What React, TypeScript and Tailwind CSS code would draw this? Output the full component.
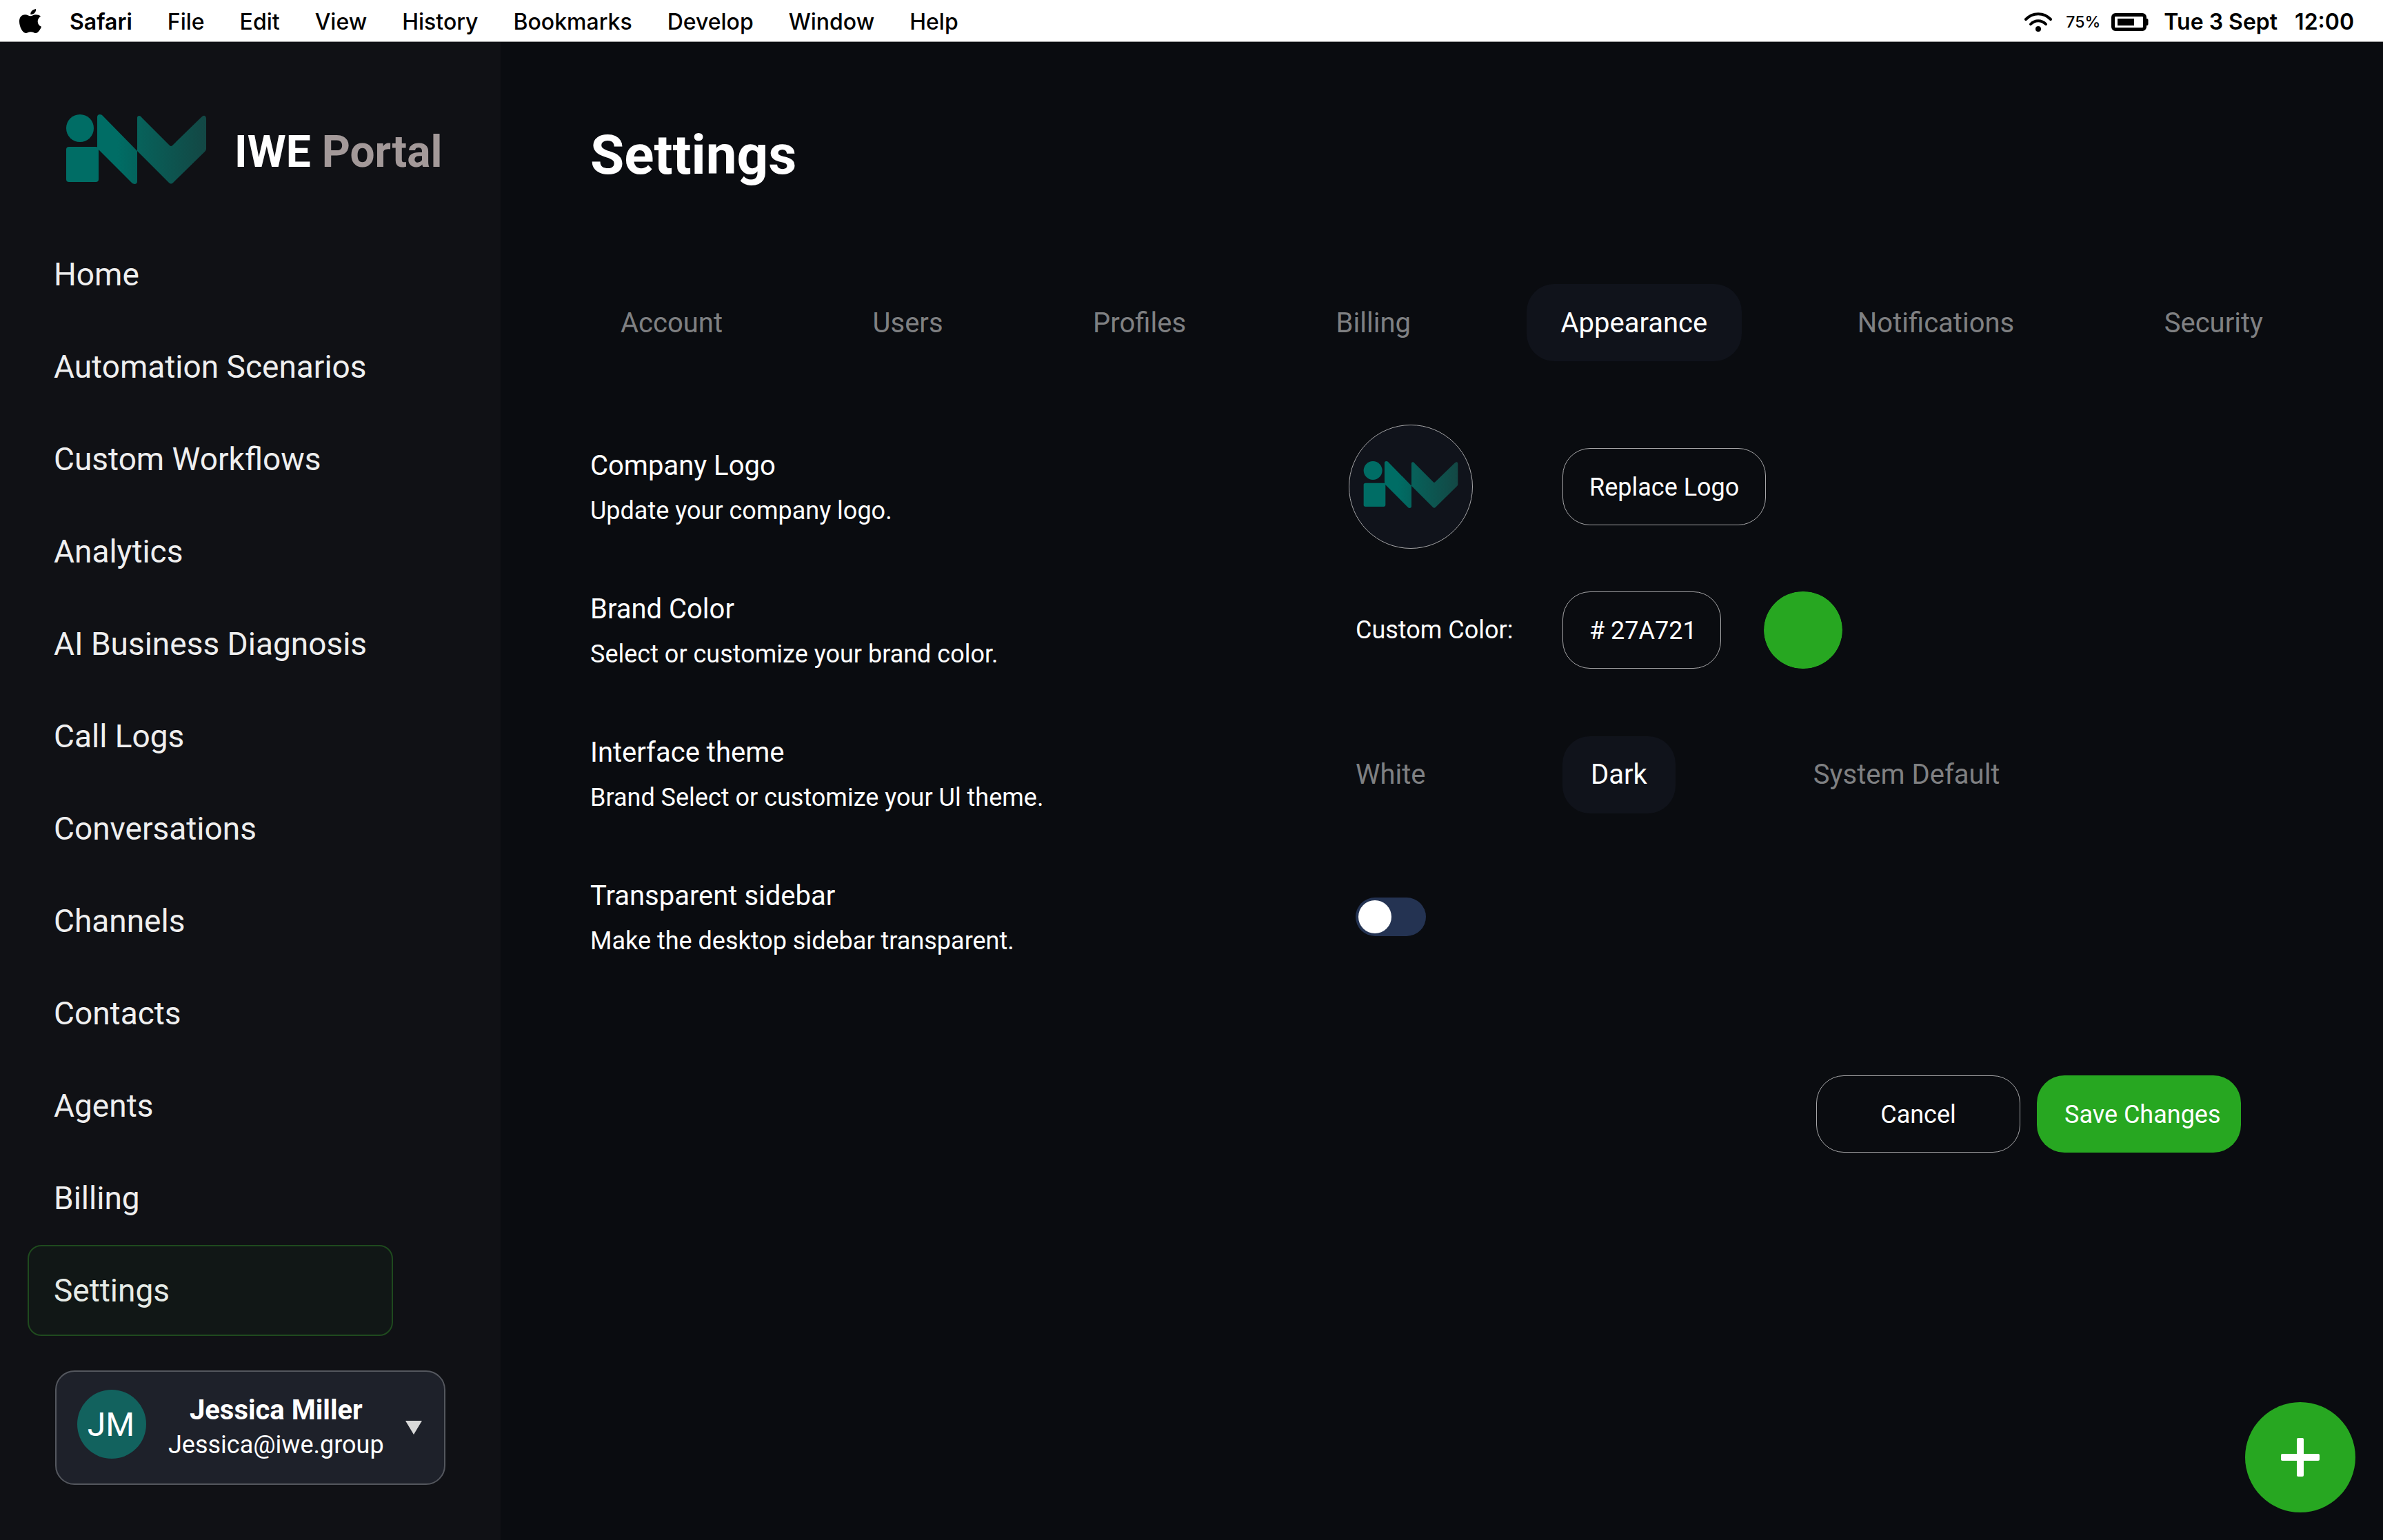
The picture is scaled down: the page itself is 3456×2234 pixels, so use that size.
import { useId, useState } from "react";

const menus = ["File", "Edit", "View", "History", "Bookmarks", "Develop", "Window", "Help"];

const navItems = [
  "Home",
  "Automation Scenarios",
  "Custom Workflows",
  "Analytics",
  "AI Business Diagnosis",
  "Call Logs",
  "Conversations",
  "Channels",
  "Contacts",
  "Agents",
  "Billing",
  "Settings",
];

const tabs = ["Account", "Users", "Profiles", "Billing", "Appearance", "Notifications", "Security"];

function AppleIcon() {
  return (
    <svg viewBox="0 0 96 105" className="h-[35px] w-8" fill="#000" aria-hidden="true">
      <path d="M72 0C74 12 64 25 49 24C47 13 58 2 72 0Z" />
      <path d="M49 31C41 31 35 25 25 25C10 25 0 37 0 54C0 78 15 105 28 105C36 105 40 100 50 100C60 100 63 105 71 105C82 105 92 88 96 77C86 73 80 65 80 54C80 45 85 37 93 32C87 27 80 25 72 25C62 25 56 31 49 31Z" />
    </svg>
  );
}

function WifiIcon() {
  return (
    <svg viewBox="0 0 40 28" className="h-7 w-10" fill="none" aria-hidden="true">
      <path d="M2 10C12 -0.5 28 -0.5 38 10" stroke="#000" strokeWidth="4" strokeLinecap="round" />
      <path d="M9 17C15 10.5 25 10.5 31 17" stroke="#000" strokeWidth="4" strokeLinecap="round" />
      <circle cx="20" cy="24" r="4" fill="#000" />
    </svg>
  );
}

function BatteryIcon() {
  return (
    <svg viewBox="0 0 54 26" className="h-[26px] w-[54px]" aria-hidden="true">
      <rect x="2.5" y="2.5" width="46" height="21" rx="3.5" fill="#fff" stroke="#000" strokeWidth="5" />
      <rect x="9" y="8" width="24" height="10" fill="#000" />
      <path d="M50 8h1.5a2 2 0 0 1 2 2v6a2 2 0 0 1-2 2H50z" fill="#000" />
    </svg>
  );
}

function Logo({ className }: { className: string }) {
  const id = useId();
  return (
    <svg viewBox="0 0 203 101" className={className} role="img" aria-label="IWE logo">
      <defs>
        <linearGradient id={`${id}a`} gradientUnits="userSpaceOnUse" x1="45" y1="0" x2="103" y2="0">
          <stop offset="0.5" stopColor="#006d65" />
          <stop offset="1" stopColor="#04635c" />
        </linearGradient>
        <linearGradient id={`${id}b`} gradientUnits="userSpaceOnUse" x1="103" y1="0" x2="203" y2="0">
          <stop offset="0" stopColor="#07625b" />
          <stop offset="1" stopColor="#134744" />
        </linearGradient>
      </defs>
      <circle cx="20" cy="20" r="20" fill="#006d65" />
      <rect x="0" y="47" width="47" height="51" rx="4" fill="#006d65" />
      <path
        d="M45 4Q45 0 49 0Q52 0 54 3L103 53V97Q103 101 99 101Q96 101 94 98L47 51L45 50Z"
        fill={`url(#${id}a)`}
      />
      <path
        d="M103 5Q103 2 106 2Q108 2 110 5L150 45Q152 47 154 45L196 4Q199 1 201 2Q203 3 203 6V50Q203 52 201 54L155 99Q152 102 149 99L103 53Z"
        fill={`url(#${id}b)`}
      />
    </svg>
  );
}

function MenuBar() {
  return (
    <header className="flex h-[61px] shrink-0 items-center justify-between border-b border-[#8a8a8a] bg-white pt-1 pr-[42px] pl-7 font-[Inter,sans-serif] text-[32px] leading-10 font-medium text-black">
      <div className="flex items-center">
        <button className="mr-[41px] -mt-1" aria-label="Apple menu">
          <AppleIcon />
        </button>
        <div className="flex items-center gap-[51px]">
          <button className="font-semibold">Safari</button>
          {menus.map((m) => (
            <button key={m}>{m}</button>
          ))}
        </div>
      </div>
      <div className="flex items-center">
        <WifiIcon />
        <span className="ml-5 text-[23px]">75%</span>
        <span className="ml-4">
          <BatteryIcon />
        </span>
        <span className="ml-[22px] font-semibold">Tue 3 Sept</span>
        <span className="ml-[25px] font-semibold">12:00</span>
      </div>
    </header>
  );
}

function Sidebar() {
  return (
    <aside className="flex w-[726px] shrink-0 flex-col bg-[#101115] pb-[79px]">
      <div className="flex items-center gap-[41px] pt-[105px] pl-24">
        <Logo className="h-[101px] w-[203px]" />
        <span className="pt-2 text-[64px] leading-[76px] font-bold text-white">
          IWE <span className="text-[#a39999]">Portal</span>
        </span>
      </div>
      <nav className="mt-[65px] flex w-[570px] flex-col gap-0.5 pl-10 text-[46px] leading-[56px]">
        {navItems.map((item) => (
          <a
            key={item}
            href="#"
            className={
              item === "Settings"
                ? "flex h-[132px] items-center rounded-[20px] border-2 border-[#1f4a1e] bg-[#111716] pl-9 text-[#e6ebe6]"
                : "flex h-[132px] items-center pl-[38px] text-[#efefef]"
            }
          >
            {item}
          </a>
        ))}
      </nav>
      <button className="mt-[50px] mr-20 ml-20 flex h-[166px] items-center rounded-[28px] border-2 border-[#54575e] bg-[#1e212a] pr-8 pb-2.5 pl-[30px] text-white">
        <span className="flex size-[100px] items-center justify-center rounded-full bg-[#12625e] pt-0.5 pr-0.5 text-[48px] leading-[56px]">
          JM
        </span>
        <span className="ml-8 flex flex-col pt-2.5 text-center">
          <span className="text-[40px] leading-[50px] font-bold">Jessica Miller</span>
          <span className="text-[36px] leading-[50px]">Jessica@iwe.group</span>
        </span>
        <svg viewBox="0 0 24 20" className="mt-2.5 ml-auto h-5 w-6" fill="#d9d9d9" aria-hidden="true">
          <path d="M0 0H24L12 20Z" />
        </svg>
      </button>
    </aside>
  );
}

const rowClass = "grid h-[208px] grid-cols-[1110fr_300fr_984fr] items-center";
const themeClass =
  "inline-flex h-28 cursor-pointer items-center rounded-[40px] text-[40px] leading-[48px] text-[#7f8082] has-checked:bg-[#10131b] has-checked:px-[41px] has-checked:text-white";
const outlineClass =
  "h-28 rounded-[40px] border border-[#a6a6a8] bg-transparent px-[38px] pt-0.5 text-[36px] leading-[44px] text-white";

function RowLabel({ title, text, htmlFor }: { title: string; text: string; htmlFor?: string }) {
  return (
    <div className="flex flex-col gap-[19px] pt-0.5 text-white">
      <label htmlFor={htmlFor} className="text-[40px] leading-[48px]">
        {title}
      </label>
      <p className="text-[36px] leading-[44px]">{text}</p>
    </div>
  );
}

function ThemeOption({
  name,
  value,
  onPick,
}: {
  name: string;
  value: string;
  onPick: (name: string) => void;
}) {
  return (
    <label className={themeClass}>
      <input
        type="radio"
        name="theme"
        className="sr-only"
        checked={value === name}
        onChange={() => onPick(name)}
      />
      {name}
    </label>
  );
}

export default function App() {
  const [tab, setTab] = useState("Appearance");
  const [theme, setTheme] = useState("Dark");
  const [color, setColor] = useState("27A721");
  const [transparent, setTransparent] = useState(false);

  return (
    <div className="flex min-h-screen flex-col bg-[#0a0c10] font-[Roboto,sans-serif]">
      <MenuBar />
      <div className="flex grow">
        <Sidebar />
        <main className="flex min-w-0 grow flex-col">
          <h1 className="pt-[116px] pl-[130px] text-[80px] leading-[96px] font-bold text-white">Settings</h1>

          <div role="tablist" className="mt-[139px] flex justify-between px-[124px] text-[40px] leading-[48px]">
            {tabs.map((t) => (
              <button
                key={t}
                role="tab"
                aria-selected={t === tab}
                onClick={() => setTab(t)}
                className="h-28 rounded-[40px] px-[50px] pt-0.5 text-[#7f8082] aria-selected:bg-[#10131b] aria-selected:text-white"
              >
                {t}
              </button>
            ))}
          </div>

          <form className="mt-[78px] pr-[206px] pl-[130px]" onSubmit={(e) => e.preventDefault()}>
            <div className={rowClass}>
              <RowLabel title="Company Logo" text="Update your company logo." htmlFor="logo" />
              <div className="-ml-2.5 flex size-[180px] items-center justify-center rounded-full border border-[#a6a6a8] bg-[#10131b] pb-1.5">
                <Logo className="h-[68px] w-[138px]" />
              </div>
              <div>
                <button id="logo" type="button" className={outlineClass}>
                  Replace Logo
                </button>
              </div>
            </div>

            <div className={rowClass}>
              <RowLabel title="Brand Color" text="Select or customize your brand color." htmlFor="swatch" />
              <label htmlFor="hex" className="text-[36px] leading-[44px] text-white">
                Custom Color:
              </label>
              <div className="flex items-center gap-[62px]">
                <input
                  id="hex"
                  type="text"
                  value={`# ${color}`}
                  onChange={(e) => setColor(e.target.value.replace(/[^0-9a-fA-F]/g, "").slice(0, 6))}
                  className={`${outlineClass} w-[230px] pr-0`}
                />
                <input
                  id="swatch"
                  type="color"
                  value={`#${color.padEnd(6, "0").toLowerCase()}`}
                  onChange={(e) => setColor(e.target.value.slice(1).toUpperCase())}
                  className="h-28 w-[114px] cursor-pointer appearance-none rounded-full border-0 bg-transparent p-0 [&::-webkit-color-swatch]:rounded-full [&::-webkit-color-swatch]:border-0 [&::-webkit-color-swatch-wrapper]:p-0"
                />
              </div>
            </div>

            <div className={rowClass} role="radiogroup" aria-label="Interface theme">
              <RowLabel title="Interface theme" text="Brand Select or customize your Ul theme." />
              <div className="flex pt-1">
                <ThemeOption name="White" value={theme} onPick={setTheme} />
              </div>
              <div className="flex items-center gap-[200px] pt-1">
                <ThemeOption name="Dark" value={theme} onPick={setTheme} />
                <ThemeOption name="System Default" value={theme} onPick={setTheme} />
              </div>
            </div>

            <div className={rowClass}>
              <RowLabel
                title="Transparent sidebar"
                text="Make the desktop sidebar transparent."
                htmlFor="transparent"
              />
              <label className="flex h-14 w-[102px] cursor-pointer items-center rounded-full bg-[#243352] px-1 has-checked:justify-end has-checked:bg-[#27a721]">
                <input
                  id="transparent"
                  type="checkbox"
                  className="sr-only"
                  checked={transparent}
                  onChange={(e) => setTransparent(e.target.checked)}
                />
                <span className="size-12 rounded-full bg-white" />
              </label>
            </div>

            <div className="mt-[126px] flex justify-end gap-6 text-[36px] leading-[44px] text-white">
              <button type="button" className="h-28 w-[296px] rounded-[40px] border border-[#a6a6a8] pt-0.5">
                Cancel
              </button>
              <button type="submit" className="h-28 w-[296px] rounded-[40px] bg-[#27a721] pt-0.5 pl-10 text-left whitespace-nowrap">
                Save Changes
              </button>
            </div>
          </form>

          <button
            aria-label="Add"
            className="mt-auto mr-10 mb-10 flex size-40 items-center justify-center self-end rounded-full bg-[#27a721]"
          >
            <svg viewBox="0 0 56 56" className="size-14" fill="#fff" aria-hidden="true">
              <rect x="23" y="0" width="10" height="56" rx="2" />
              <rect x="0" y="23" width="56" height="10" rx="2" />
            </svg>
          </button>
        </main>
      </div>
    </div>
  );
}
